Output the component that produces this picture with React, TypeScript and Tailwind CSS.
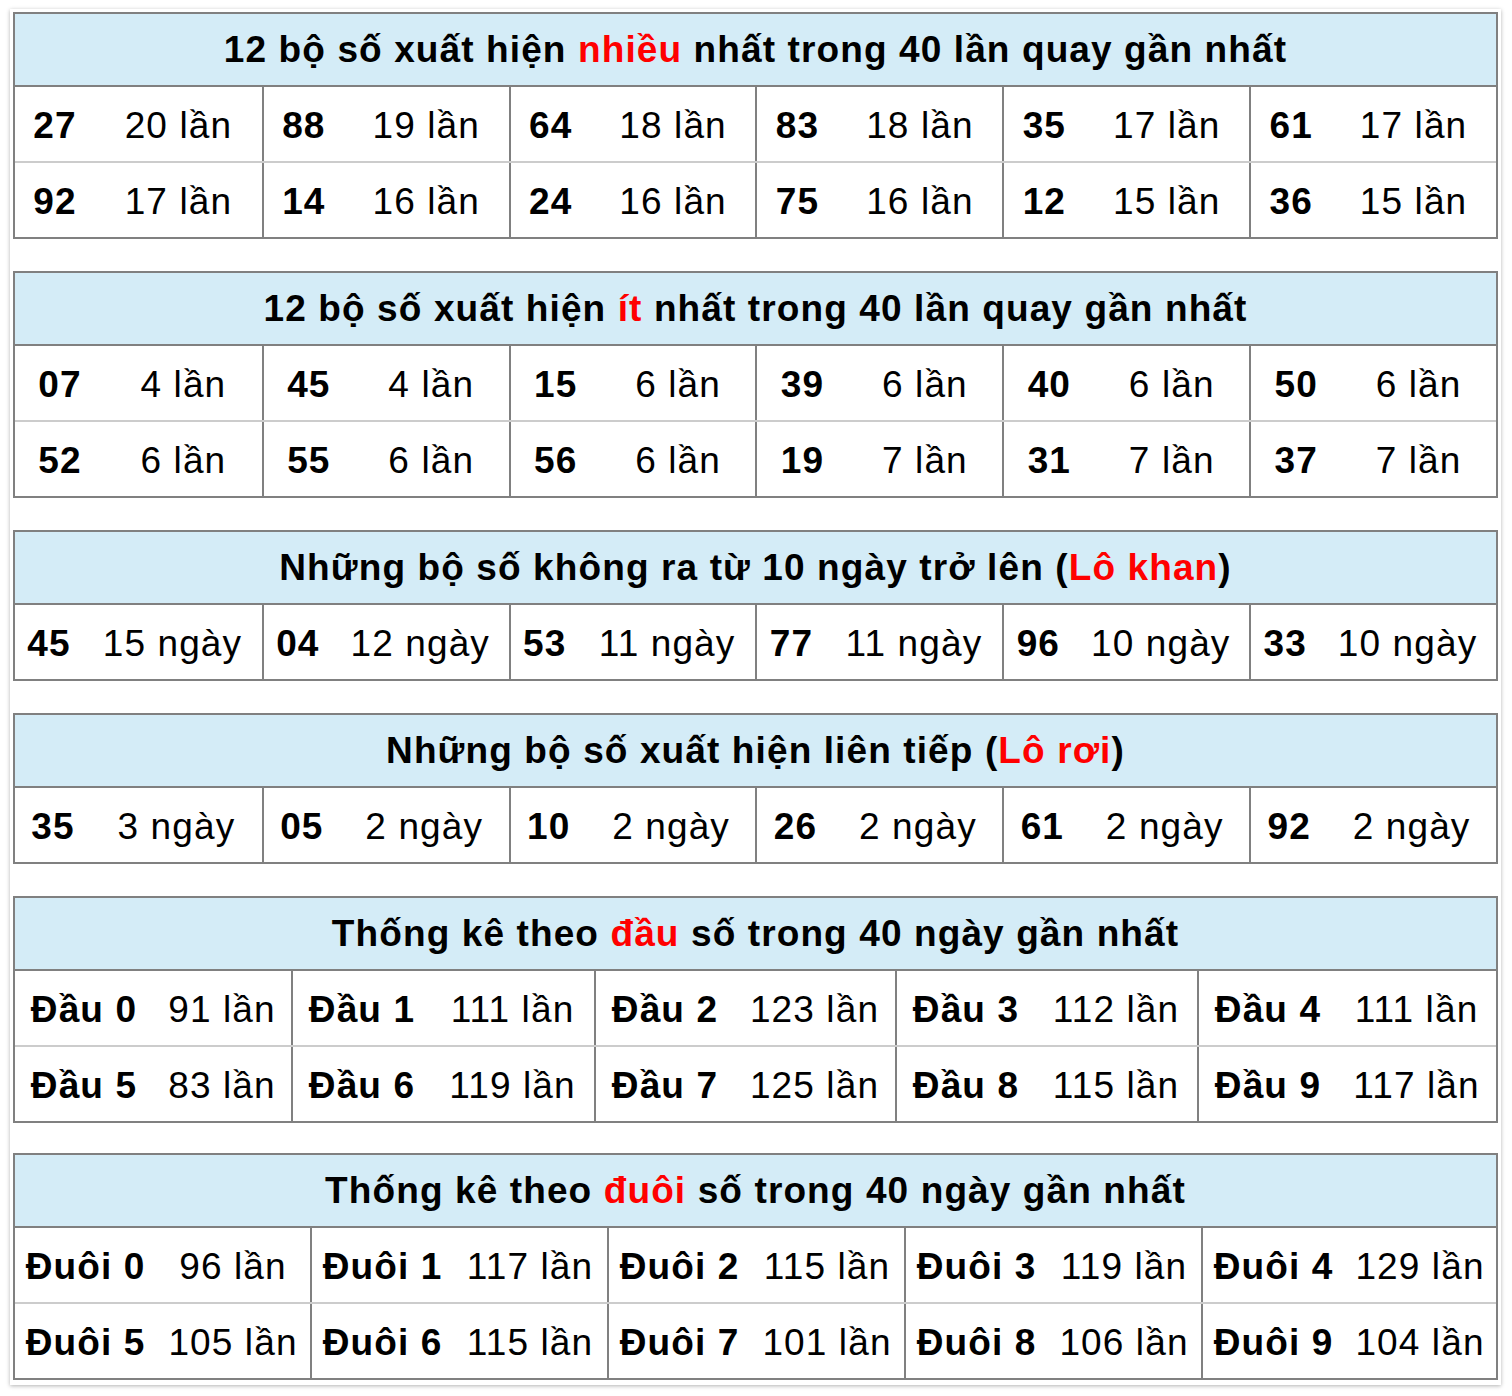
import type { ReactNode } from 'react';

type Cell = [string, string];

function StatTable({
  title,
  cols,
  numW,
  rows,
  className,
}: {
  title: ReactNode;
  cols: string;
  numW: string;
  rows: Cell[][];
  className?: string;
}) {
  return (
    <div className={`border-2 border-[#808080] ${className ?? ''}`}>
      <div className="flex h-[73px] items-center justify-center border-b-2 border-[#808080] bg-[#d4ecf7] font-bold text-black">
        {title}
      </div>
      {rows.map((row, ri) => (
        <div
          key={ri}
          className={`grid ${cols} ${ri < rows.length - 1 ? 'h-[76px] border-b-2 border-[#cccccc]' : 'h-[74px]'}`}
        >
          {row.map(([num, count], ci) => (
            <div
              key={ci}
              className={`flex items-center pt-[4px] ${ci > 0 ? 'border-l-2 border-[#808080]' : ''}`}
            >
              <span className={`${numW} shrink-0 text-center font-bold`}>{num}</span>
              <span className="flex-1 text-center whitespace-nowrap">{count}</span>
            </div>
          ))}
        </div>
      ))}
    </div>
  );
}

const Red = ({ children }: { children: ReactNode }) => <span className="text-[#ff0000]">{children}</span>;

const nhieu: Cell[][] = [
  [['27', '20 lần'], ['88', '19 lần'], ['64', '18 lần'], ['83', '18 lần'], ['35', '17 lần'], ['61', '17 lần']],
  [['92', '17 lần'], ['14', '16 lần'], ['24', '16 lần'], ['75', '16 lần'], ['12', '15 lần'], ['36', '15 lần']],
];

const it: Cell[][] = [
  [['07', '4 lần'], ['45', '4 lần'], ['15', '6 lần'], ['39', '6 lần'], ['40', '6 lần'], ['50', '6 lần']],
  [['52', '6 lần'], ['55', '6 lần'], ['56', '6 lần'], ['19', '7 lần'], ['31', '7 lần'], ['37', '7 lần']],
];

const khan: Cell[][] = [
  [['45', '15 ngày'], ['04', '12 ngày'], ['53', '11 ngày'], ['77', '11 ngày'], ['96', '10 ngày'], ['33', '10 ngày']],
];

const roi: Cell[][] = [
  [['35', '3 ngày'], ['05', '2 ngày'], ['10', '2 ngày'], ['26', '2 ngày'], ['61', '2 ngày'], ['92', '2 ngày']],
];

const dau: Cell[][] = [
  [['Đầu 0', '91 lần'], ['Đầu 1', '111 lần'], ['Đầu 2', '123 lần'], ['Đầu 3', '112 lần'], ['Đầu 4', '111 lần']],
  [['Đầu 5', '83 lần'], ['Đầu 6', '119 lần'], ['Đầu 7', '125 lần'], ['Đầu 8', '115 lần'], ['Đầu 9', '117 lần']],
];

const duoi: Cell[][] = [
  [['Đuôi 0', '96 lần'], ['Đuôi 1', '117 lần'], ['Đuôi 2', '115 lần'], ['Đuôi 3', '119 lần'], ['Đuôi 4', '129 lần']],
  [['Đuôi 5', '105 lần'], ['Đuôi 6', '115 lần'], ['Đuôi 7', '101 lần'], ['Đuôi 8', '106 lần'], ['Đuôi 9', '104 lần']],
];

export default function App() {
  return (
    <div className="min-h-[1396px] bg-white pt-[9px] pl-[10px] font-['Liberation_Sans',Arial,sans-serif] text-[37px] tracking-[0.03em] text-black">
      <div className="flex w-[1491px] flex-col bg-white px-[3px] pt-[3px] pb-[5px] shadow-[0_1px_4px_rgba(0,0,0,0.3)]">
        <StatTable
          title={<>12 bộ số xuất hiện&nbsp;<Red>nhiều</Red>&nbsp;nhất trong 40 lần quay gần nhất</>}
          cols="grid-cols-6"
          numW="w-[80px]"
          rows={nhieu}
        />
        <StatTable
          className="mt-[32px]"
          title={<>12 bộ số xuất hiện&nbsp;<Red>ít</Red>&nbsp;nhất trong 40 lần quay gần nhất</>}
          cols="grid-cols-6"
          numW="w-[90px]"
          rows={it}
        />
        <StatTable
          className="mt-[32px]"
          title={<>Những bộ số không ra từ 10 ngày trở lên (<Red>Lô khan</Red>)</>}
          cols="grid-cols-6"
          numW="w-[68px]"
          rows={khan}
        />
        <StatTable
          className="mt-[32px]"
          title={<>Những bộ số xuất hiện liên tiếp (<Red>Lô rơi</Red>)</>}
          cols="grid-cols-6"
          numW="w-[76px]"
          rows={roi}
        />
        <StatTable
          className="mt-[32px]"
          title={<>Thống kê theo&nbsp;<Red>đầu</Red>&nbsp;số trong 40 ngày gần nhất</>}
          cols="grid-cols-[276px_303px_301px_302px_1fr]"
          numW="w-[138px]"
          rows={dau}
        />
        <StatTable
          className="mt-[30px]"
          title={<>Thống kê theo&nbsp;<Red>đuôi</Red>&nbsp;số trong 40 ngày gần nhất</>}
          cols="grid-cols-[295px_297px_297px_297px_1fr]"
          numW="w-[141px]"
          rows={duoi}
        />
      </div>
    </div>
  );
}
